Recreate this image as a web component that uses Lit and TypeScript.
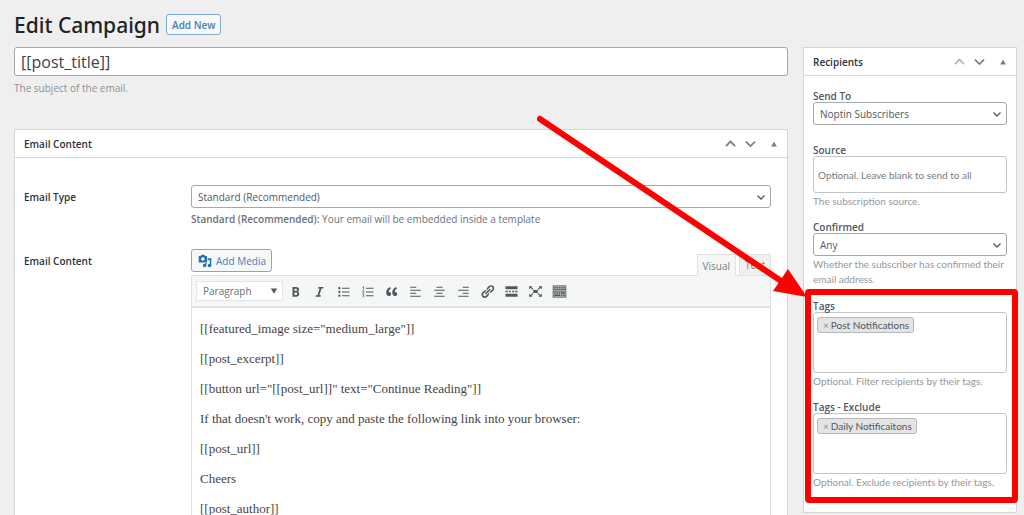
import { LitElement, html, css, svg } from "lit";
import { customElement, property } from "lit/decorators.js";

const icons: Record<string, unknown> = {
  bold: svg`<path d="M6 4v13h4.54c1.37 0 2.46-.33 3.26-1 .8-.66 1.2-1.58 1.2-2.77 0-.84-.17-1.51-.51-2.01s-.9-.85-1.67-1.03v-.09c.57-.1 1.02-.4 1.36-.9s.51-1.13.51-1.91c0-1.14-.39-1.98-1.17-2.5C12.75 4.26 11.5 4 9.78 4H6zm2.57 5.15V6.26h1.36c.73 0 1.27.11 1.61.32.34.22.51.58.51 1.07 0 .54-.16.92-.47 1.15s-.82.35-1.51.35h-1.5zm0 2.19h1.6c1.44 0 2.16.53 2.16 1.61 0 .6-.17 1.05-.51 1.34s-.86.43-1.57.43H8.57v-3.38z"/>`,
  italic: svg`<path d="M14.78 6h-2.13l-2.8 9h2.12l-.62 2H4.6l.62-2h2.14l2.8-9H8.03l.62-2h6.75z"/>`,
  bullets: svg`<path d="M4.500 7C3.670 7 3 6.330 3 5.500 3 4.680 3.670 4 4.500 4 5.320 4 6 4.680 6 5.500 6 6.330 5.320 7 4.500 7zM8 5h10v1.300H8zM4.500 12c-.83 0-1.500-.67-1.500-1.500C3 9.680 3.670 9 4.500 9c.82 0 1.500.68 1.500 1.500 0 .83-.68 1.500-1.500 1.500zM8 10h10v1.300H8zM4.500 17c-.83 0-1.500-.67-1.500-1.500 0-.82.67-1.500 1.500-1.500.82 0 1.500.68 1.500 1.500 0 .83-.68 1.500-1.500 1.500zM8 15h10v1.300H8z"/>`,
  numbers: svg`<path d="M8 5h10v1.300H8zM8 10h10v1.300H8zM8 15h10v1.300H8z"/><path fill="none" stroke="currentColor" d="M3.500 4.500l1.300-1v4M3.300 9.300c1-1 2.300-.3 2 .6-.2.700-1.300 1.200-2 2h2.400M3.300 14h2l-1 1.300c1.600 0 1.600 2.200-1 2"/>`,
  quote: svg`<path d="M9.490 13.220c0-.74-.2-1.380-.61-1.900-.62-.78-1.830-.88-2.530-.72-.29-1.650 1.110-3.750 2.920-4.650L7.880 4c-2.730 1.300-5.420 4.280-4.960 8.050C3.210 14.430 4.590 16 6.540 16c.85 0 1.560-.25 2.120-.75s.83-1.180.83-2.030zm8.050 0c0-.74-.2-1.380-.61-1.900-.63-.78-1.830-.88-2.530-.72-.29-1.650 1.110-3.750 2.920-4.650L15.930 4c-2.730 1.300-5.410 4.280-4.950 8.050.29 2.380 1.660 3.950 3.610 3.950.85 0 1.560-.25 2.120-.75s.83-1.180.83-2.030z"/>`,
  left: svg`<path d="M11 3.500H3V5h8zM17 7.500H3V9h14zM11 11.500H3V13h8zM17 15.500H3V17h14z"/>`,
  center: svg`<path d="M14 3.500H6V5h8zM17 7.500H3V9h14zM14 11.500H6V13h8zM17 15.500H3V17h14z"/>`,
  right: svg`<path d="M17 3.500H9V5h8zM17 7.500H3V9h14zM17 11.500H9V13h8zM17 15.500H3V17h14z"/>`,
  link: svg`<path d="M17.740 2.760c1.680 1.690 1.680 4.410 0 6.100l-1.530 1.520c-1.120 1.120-2.700 1.470-4.140 1.090l2.620-2.610.76-.77.76-.76c.84-.84.84-2.200 0-3.040-.84-.85-2.200-.85-3.040 0l-.77.76-3.380 3.380c-.37-1.440-.02-3.020 1.100-4.140l1.520-1.530c1.690-1.680 4.420-1.680 6.100 0zM8.590 13.430l5.340-5.340c.42-.42.42-1.100 0-1.520-.44-.43-1.130-.39-1.530 0l-5.330 5.340c-.42.42-.42 1.100 0 1.520.44.43 1.130.39 1.520 0zm-.76 2.290l4.140-4.150c.38 1.440.03 3.020-1.090 4.140l-1.520 1.530c-1.690 1.680-4.410 1.680-6.100 0-1.680-1.680-1.680-4.420 0-6.100l1.530-1.520c1.120-1.120 2.700-1.470 4.140-1.100l-4.140 4.150c-.85.84-.85 2.200 0 3.050.84.84 2.200.84 3.040 0z"/>`,
  more: svg`<path d="M18 7V3H2v4h16zM5 11V9H2v2h3zm4 0V9H6.500v2H9zm4.500 0V9H11v2h2.500zM18 11V9h-3v2h3zm0 6v-4H2v4h16z"/>`,
  expand: svg`<path d="M7 8h6v4H7zM1.500 3H6L4.600 4.400 7.500 7l-1 1-3-2.600L1.500 7zM18.500 3H14l1.400 1.400L12.500 7l1 1 3-2.600L18.500 7zM1.500 17H6l-1.400-1.400L7.500 13l-1-1-3 2.600L1.500 13zM18.500 17H14l1.400-1.400L12.500 13l1-1 3 2.600L18.500 13z"/>`,
  keyboard: svg`<path d="M1 2h18v16H1z" opacity=".35"/><path d="M19 2v6H1V2h18zm-1 5V3H2v4h16zM5 4v2H3V4h2zm3 0v2H6V4h2zm3 0v2H9V4h2zm3 0v2h-2V4h2zm3 0v2h-2V4h2zm2 5v9H1V9h18zm-1 8v-7H2v7h16zM5 11v2H3v-2h2zm3 0v2H6v-2h2zm3 0v2H9v-2h2zm6 0v2h-5v-2h5zm-6 3v2H3v-2h8zm3 0v2h-2v-2h2zm3 0v2h-2v-2h2z"/>`,
  media: svg`<path d="M13 11V4c0-.55-.45-1-1-1h-1.670L9 1H5L3.670 3H2c-.55 0-1 .45-1 1v7c0 .55.45 1 1 1h10c.55 0 1-.45 1-1zM7 4.500c1.380 0 2.500 1.120 2.500 2.500S8.380 9.500 7 9.500 4.500 8.380 4.500 7 5.620 4.500 7 4.500zM14 6h5v10.500c0 1.380-1.120 2.500-2.500 2.500S14 17.880 14 16.500s1.120-2.500 2.500-2.500c.17 0 .34.02.5.05V9h-3V6zm-4 8.050V13h2v3.500c0 1.380-1.120 2.500-2.500 2.500S7 17.880 7 16.500 8.120 14 9.500 14c.17 0 .34.02.5.05z"/>`,
  up: svg`<path fill="none" stroke="currentColor" stroke-width="2.600" d="M3 14l7-7 7 7"/>`,
  down: svg`<path fill="none" stroke="currentColor" stroke-width="2.600" d="M3 7l7 7 7-7"/>`,
  triangle: svg`<path d="M3 16l7-12 7 12z"/>`,
  triangleDown: svg`<path d="M2 4h16l-8 13z"/>`,
};

const icon = (name: string) =>
  html`<svg class="icon ${name}" viewBox="0 0 20 20" fill="currentColor" aria-hidden="true">${icons[name]}</svg>`;

const shared = css`
  * { box-sizing: border-box; }
  button, input, select { font: inherit; color: inherit; margin: 0; }
  button { cursor: pointer; padding: 0; border: 0; background: none; }
  .icon { display: block; width: 15px; height: 15px; }
  .choice { display: grid; align-items: center; }
  .choice > * { grid-area: 1 / 1; }
  .choice .icon { justify-self: end; margin-right: 5px; width: 10px; height: 10px; color: #50575e; pointer-events: none; }
  .select {
    appearance: none; width: 100%; height: 23px; padding: 0 20px 0 6px;
    border: 1px solid #a5a8ab; border-radius: 3px; background: #fff;
    font-size: 10px; color: #50575e;
  }
  .hint { margin: 1px 0 0; font-family: "Lato", sans-serif; font-size: 10px; line-height: 15px; color: #96989b; }
`;

@customElement("meta-box")
class MetaBox extends LitElement {
  @property() heading = "";
  @property({ type: Boolean }) first = false;
  static styles = [shared, css`
    :host { display: block; background: #fff; border: 1px solid #d3d5d7; }
    .head { display: flex; align-items: center; height: 28px; padding: 0 8px 0 9px; border-bottom: 1px solid #d3d5d7; }
    h2 { flex: 1; margin: 0; font-size: 10px; line-height: 16px; font-weight: 600; color: #2c3338; }
    .order { display: grid; place-items: center; width: 20px; height: 24px; color: #787c82; }
    .order .icon { width: 13px; height: 13px; }
    .order.muted { color: #b4b6b9; }
    .toggle { width: 10px; margin-left: 9px; }
    .toggle .icon { width: 8px; height: 8px; }
  `];
  render() {
    return html`
      <div class="head">
        <h2>${this.heading}</h2>
        <button class="order ${this.first ? "muted" : ""}" aria-label="Move up">${icon("up")}</button>
        <button class="order" aria-label="Move down">${icon("down")}</button>
        <button class="order toggle" aria-label="Toggle panel">${icon("triangle")}</button>
      </div>
      <slot></slot>`;
  }
}

@customElement("tag-field")
class TagField extends LitElement {
  @property() label = "";
  @property() hint = "";
  @property({ type: Array }) tags: string[] = [];
  static styles = [shared, css`
    :host { display: block; }
    label { display: block; font-size: 10px; line-height: 12px; font-weight: 600; color: #50575e; }
    .box { display: flex; flex-wrap: wrap; align-content: flex-start; gap: 4px; height: 61px; padding: 4px 3px; border: 1px solid #c3c4c7; border-radius: 3px; background: #fff; }
    .tag { display: flex; align-items: center; gap: 2px; height: 16px; padding: 0 4px 0 5px; border: 1px solid #b5b7b9; border-radius: 3px; background: #e4e4e4; font-family: "Lato", sans-serif; font-size: 10px; line-height: 14px; color: #50575e; }
    .tag button { color: #8c8f94; line-height: 14px; }
    input { flex: 1 1 100%; min-width: 0; height: 16px; padding: 0; border: 0; outline: 0; background: none; font-size: 10px; }
  `];
  render() {
    return html`
      <label for="search">${this.label}</label>
      <div class="box">
        ${this.tags.map((t) => html`<span class="tag"><button aria-label="Remove ${t}">×</button>${t}</span>`)}
        <input id="search" type="text" />
      </div>
      <p class="hint">${this.hint}</p>`;
  }
}

const tools: [string, string][] = [
  ["bold", "Bold"], ["italic", "Italic"], ["bullets", "Bulleted list"], ["numbers", "Numbered list"],
  ["quote", "Blockquote"], ["left", "Align left"], ["center", "Align center"], ["right", "Align right"],
  ["link", "Insert link"], ["more", "Read more"], ["expand", "Fullscreen"], ["keyboard", "Toolbar toggle"],
];

const paragraphs = [
  '[[featured_image size="medium_large"]]',
  "[[post_excerpt]]",
  '[[button url="[[post_url]]" text="Continue Reading"]]',
  "If that doesn't work, copy and paste the following link into your browser:",
  "[[post_url]]",
  "Cheers",
  "[[post_author]]",
];

@customElement("app-root")
class AppRoot extends LitElement {
  static styles = [shared, css`
    :host {
      display: block; height: 100vh; overflow: hidden; background: #efefef;
      font-family: "Open Sans", "Noto Sans", sans-serif; font-size: 10px; color: #3c434a;
    }
    .page { padding: 0 7px 0 14px; }
    header { display: flex; align-items: center; gap: 6px; height: 47px; padding-top: 2px; }
    h1 { margin: 0; font-family: "Noto Sans", "Open Sans", sans-serif; font-size: 21px; line-height: 28px; font-weight: 500; color: #1d2327; }
    .add { height: 21px; padding: 0 5px; border: 1px solid #7fa9cf; border-radius: 3px; background: #f6f7f7; font-weight: 600; color: #4a80b4; text-decoration: none; line-height: 20px; }
    .columns { display: grid; grid-template-columns: minmax(0, 1fr) 214px; gap: 15px; align-items: start; }
    .title { display: block; width: 100%; height: 29px; padding: 0 6px; border: 1px solid #a5a8ab; border-radius: 3px; background: #fff; font-size: 16px; color: #3c434a; }
    .subject-hint { margin: 5px 0 33px; line-height: 15px; color: #8c8f94; }
    .form { display: grid; grid-template-columns: 167px minmax(0, 1fr); row-gap: 22px; padding: 27px 16px 0 9px; }
    .name { line-height: 25px; font-weight: 600; color: #2c3338; }
    .type-hint { margin: 4px 0 0; line-height: 15px; color: #6c7177; }
    .type-hint b { font-weight: 600; }
    .editor-top { display: flex; align-items: flex-start; justify-content: space-between; height: 26px; }
    .media-btn { display: flex; align-items: center; gap: 4px; height: 23px; padding: 0 5px 0 6px; border: 1px solid #7fa9cf; border-radius: 3px; background: #f6f7f7; color: #4a80b4; }
    .media-btn .icon { width: 14px; height: 14px; color: #2271b1; }
    .tabs { display: flex; align-self: flex-end; gap: 3px; }
    .tab { height: 21px; padding: 0 5px; border: 1px solid #e0e1e3; border-bottom: 0; background: #f0f0f0; color: #787c82; }
    .tab.on { height: 22px; margin-bottom: -1px; z-index: 1; background: #f5f7f7; }
    .editor { border: 1px solid #dfe1e2; background: #fff; }
    .toolbar { display: flex; align-items: center; height: 32px; padding: 0 4px; border-bottom: 2px solid #e0e2e3; background: #f5f7f7; }
    .format { width: 87px; }
    .format .select { height: 20px; border: 1px solid #e3e5e6; border-radius: 0; color: #6c7177; }
    .format .icon { width: 8px; height: 8px; }
    .tool { display: grid; place-items: center; width: 24px; height: 24px; color: #50575e; }
    .content { min-height: 240px; padding: 11px 8px; font-family: "Liberation Serif", serif; font-size: 13px; line-height: 20px; color: #444; outline: 0; }
    .content p { margin: 0 0 10px; }
    .side { padding: 14px 9px 22px; }
    .field { margin-bottom: 12px; }
    .field label { display: block; line-height: 12px; font-weight: 600; color: #50575e; }
    .send { margin-bottom: 19px; }
    .source { display: block; width: 100%; height: 37px; padding: 0 4px; border: 1px solid #c3c4c7; border-radius: 3px; background: #fff; font-family: "Lato", sans-serif; }
    .source::placeholder { color: #787c82; opacity: 1; }
    .marked { position: relative; display: grid; gap: 12px; margin-top: 13px; }
    .frame { position: absolute; inset: -11px -11px -13px -8px; border: 6px solid #f00; border-radius: 4px; pointer-events: none; }
    .arrow { position: absolute; right: 100%; top: -188px; width: 280px; height: 200px; margin-right: 6px; pointer-events: none; }
  `];

  private choice(id: string, value: string) {
    return html`<div class="choice"><select class="select" id=${id}><option>${value}</option></select>${icon("down")}</div>`;
  }

  render() {
    return html`
      <div class="page">
        <header><h1>Edit Campaign</h1><a class="add" href="#new">Add New</a></header>
        <div class="columns">
          <main>
            <input class="title" type="text" aria-label="Subject" .value=${"[[post_title]]"} />
            <p class="subject-hint">The subject of the email.</p>
            <meta-box heading="Email Content">
              <div class="form">
                <label class="name" for="type">Email Type</label>
                <div>
                  ${this.choice("type", "Standard (Recommended)")}
                  <p class="type-hint"><b>Standard (Recommended):</b> Your email will be embedded inside a template</p>
                </div>
                <span class="name" id="content-label">Email Content</span>
                <div>
                  <div class="editor-top">
                    <button class="media-btn">${icon("media")}Add Media</button>
                    <div class="tabs"><button class="tab on">Visual</button><button class="tab">Text</button></div>
                  </div>
                  <div class="editor">
                    <div class="toolbar">
                      <div class="choice format"><select class="select" aria-label="Format"><option>Paragraph</option></select>${icon("triangleDown")}</div>
                      ${tools.map(([name, label]) => html`<button class="tool" aria-label=${label}>${icon(name)}</button>`)}
                    </div>
                    <div class="content" contenteditable="true" role="textbox" aria-labelledby="content-label" spellcheck="false">
                      ${paragraphs.map((p) => html`<p>${p}</p>`)}
                    </div>
                  </div>
                </div>
              </div>
            </meta-box>
          </main>
          <meta-box heading="Recipients" first>
            <div class="side">
              <div class="field send"><label for="send">Send To</label>${this.choice("send", "Noptin Subscribers")}</div>
              <div class="field">
                <label for="source">Source</label>
                <input class="source" id="source" type="text" placeholder="Optional. Leave blank to send to all" />
                <p class="hint">The subscription source.</p>
              </div>
              <div class="field">
                <label for="confirmed">Confirmed</label>${this.choice("confirmed", "Any")}
                <p class="hint">Whether the subscriber has confirmed their email address.</p>
              </div>
              <div class="marked">
                <tag-field label="Tags" hint="Optional. Filter recipients by their tags." .tags=${["Post Notifications"]}></tag-field>
                <tag-field label="Tags - Exclude" hint="Optional. Exclude recipients by their tags." .tags=${["Daily Notificaitons"]}></tag-field>
                <div class="frame"></div>
                <svg class="arrow" viewBox="0 0 280 200" fill="#f00" aria-hidden="true">
                  <path d="M13 7L260 173" stroke="#f00" stroke-width="6" stroke-linecap="round" />
                  <path d="M261 157L246 179L280 185z" />
                </svg>
              </div>
            </div>
          </meta-box>
        </div>
      </div>`;
  }
}
